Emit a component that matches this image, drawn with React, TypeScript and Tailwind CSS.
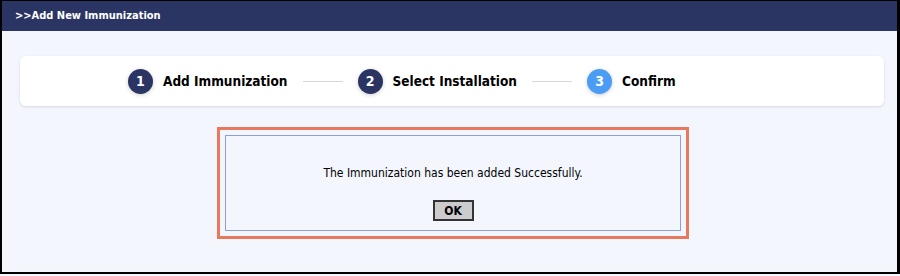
const steps = [
  { n: 1, label: 'Add Immunization', done: true },
  { n: 2, label: 'Select Installation', done: true },
  { n: 3, label: 'Confirm', done: false },
];

const App = () => {
  return (
    <div className="w-[900px] h-[276px] bg-[#f3f6fd]" style={{ fontFamily: '"DejaVu Sans Condensed", "DejaVu Sans", sans-serif' }}>
      <div className="h-[274px] border-t border-l-2 border-r-[3px] border-b-2 border-black flex flex-col">
        <div className="h-[30px] bg-[#2b3563] flex items-center pl-[13px]">
          <span className="text-white text-[11px] font-bold">&gt;&gt;Add New Immunization</span>
        </div>

        <div className="flex-1 bg-[#f3f6fd] pt-[25px]">
          <div className="ml-[18px] mr-[13px] h-[50px] bg-white rounded-md shadow-[0_1px_3px_rgba(0,0,0,0.12)] flex items-center pl-[108px]">
            {steps.map((step, i) => (
              <div key={step.n} className="flex items-center">
                {i > 0 && <div className="w-[40px] h-px bg-[#d4d7dd] mx-[15px]" />}
                <div className="flex items-center gap-[10px]">
                  <div
                    className={`w-[25px] h-[25px] rounded-full flex items-center justify-center text-white text-[14px] font-bold shadow-[0_1px_4px_rgba(0,0,0,0.2)] ${
                      step.done ? 'bg-[#2b3563]' : 'bg-[#4a9cf5]'
                    }`}
                  >
                    {step.n}
                  </div>
                  <span className="text-[13.5px] font-bold text-black">{step.label}</span>
                </div>
              </div>
            ))}
          </div>

          <div className="mt-[21px] ml-[215px] w-[472px] border-[3px] border-[#e8795c] p-[5px]">
            <div className="h-[96px] border border-[#8d9fd9] flex flex-col items-center pt-[29px]">
              <p className="text-[12px] text-black leading-[16px]">The Immunization has been added Successfully.</p>
              <button className="mt-[19px] w-[41px] h-[21px] bg-[#cccccc] border-2 border-[#333333] text-[12px] font-bold text-black leading-none">
                OK
              </button>
            </div>
          </div>
        </div>
      </div>
    </div>
  );
};

export default App;
